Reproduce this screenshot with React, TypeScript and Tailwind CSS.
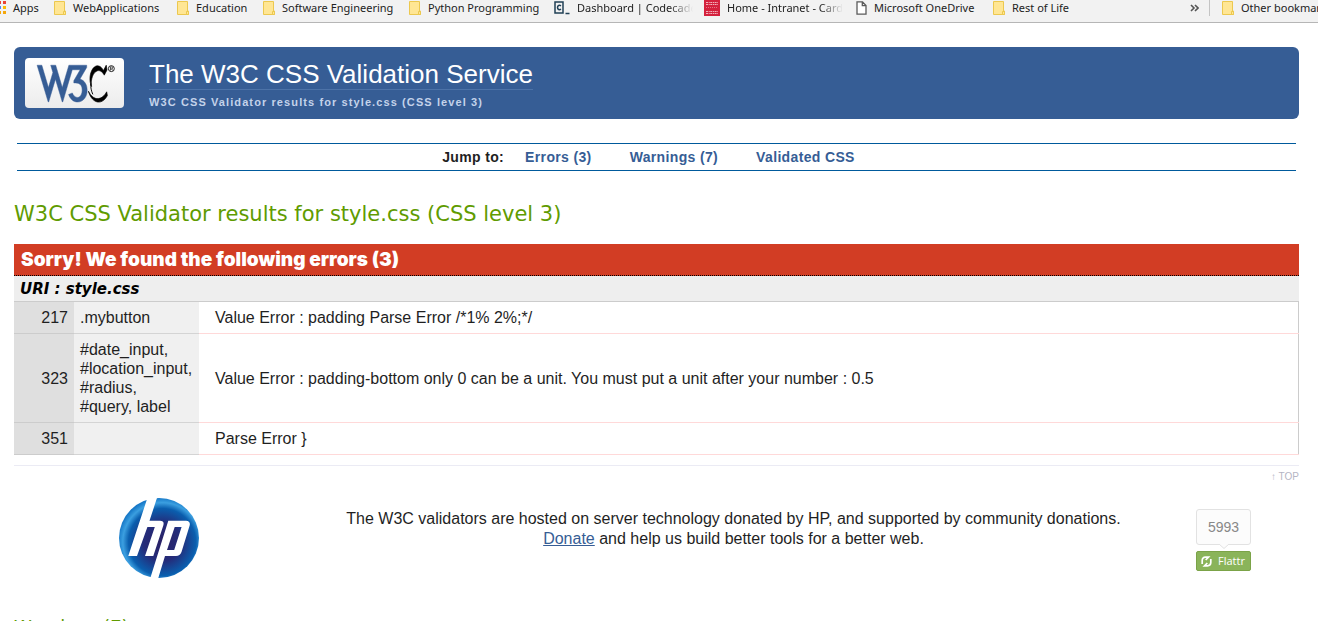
import React from "react";

function FolderIcon() {
  return (
    <svg className="shrink-0" width="12" height="14" viewBox="0 0 12 14" aria-hidden="true">
      <path d="M.5 .5h10v9.500h1v3.500h-11z" fill="#ffe694" stroke="#ecc84f" />
      <path d="M9.500 10.500h2v3h-2z" fill="#ffe694" stroke="#ecc84f" />
    </svg>
  );
}

function AppsIcon() {
  const colors = ["#ea4335", "#ea4335", "#4285f4", "#fbbc05", "#f4a70b", "#f4a70b"];
  return (
    <svg className="shrink-0" width="7" height="14" viewBox="0 0 7 14" aria-hidden="true">
      {colors.map((color, i) => (
        <rect key={i} x={(i % 2) * 5 - 2} y={Math.floor(i / 2) * 5} width="3" height="3" fill={color} />
      ))}
    </svg>
  );
}

function CodecademyIcon() {
  return (
    <svg className="shrink-0" width="16" height="16" viewBox="0 0 16 16" aria-hidden="true">
      <path d="M1 2h8v11H1z" fill="#f2f2f2" stroke="#204056" strokeWidth="1.500" />
      <path d="M7 5.800c-1.500-1-3.500-.5-3.500 1.700s2 2.700 3.500 1.700M11.500 13.500h4" fill="none" stroke="#204056" strokeWidth="1.500" />
    </svg>
  );
}

function CardiffIcon() {
  return (
    <svg className="shrink-0" width="16" height="16" viewBox="0 0 16 16" aria-hidden="true">
      <path d="M0 0h16v16H0z" fill="#d4213d" />
      <path d="M2 2.500h12M2 4.500h12M2 11.500h12M2 13.500h12" stroke="#f3b0ba" strokeDasharray="2 .7 1 .6" />
      <path d="M2 7.500h12" stroke="#e57183" strokeDasharray="1 1" />
    </svg>
  );
}

function PageIcon() {
  return (
    <svg className="shrink-0" width="11" height="14" viewBox="0 0 11 14" aria-hidden="true">
      <path d="M1 .8h5.500L10 4.500v8.700H1zM6.300 1v3.700H10" fill="#fff" stroke="#5a5a5a" strokeWidth="1.300" />
    </svg>
  );
}

function W3CLogo() {
  return (
    <svg width="80" height="39" viewBox="0 0 70 34" role="img" aria-label="W3C">
      <path
        fill="#365d95"
        stroke="#365d95"
        strokeWidth=".4"
        d="m18.117 1.006 5.759 19.580 5.759-19.580h15.607v1.946l-5.879 10.128c2.065.663 3.627 1.868 4.686 3.615 1.059 1.748 1.589 3.799 1.589 6.155 0 2.914-.775 5.363-2.324 7.348-1.549 1.985-3.555 2.978-6.017 2.978-1.854 0-3.469-.589-4.845-1.767-1.377-1.178-2.396-2.773-3.058-4.786l3.256-1.350c.477 1.218 1.106 2.178 1.887 2.879.781.702 1.701 1.052 2.760 1.052 1.112 0 2.052-.622 2.820-1.866.768-1.245 1.152-2.740 1.152-4.489 0-1.933-.411-3.429-1.231-4.488-.954-1.244-2.450-1.867-4.489-1.867h-1.588v-1.906l5.560-9.612h-6.712l-.382.65-8.163 27.548h-.397l-5.958-19.937-5.957 19.937h-.397L1.827 1.006h4.170l5.759 19.580 3.892-13.185-1.906-6.395z"
      />
      <g transform="translate(-2.600 0)" stroke="#000" strokeWidth=".6">
        <path d="m64.920 1.006.676 4.107-2.391 4.575s-.918-1.941-2.443-3.015c-1.285-.905-2.122-1.101-3.431-.832-1.681.347-3.587 2.357-4.419 4.835-.995 2.965-1.005 4.400-1.040 5.718-.056 2.113.277 3.362.277 3.362s-1.452-2.686-1.438-6.620c.009-2.808.451-5.354 1.750-7.867 1.143-2.209 2.842-3.535 4.350-3.691 1.559-.161 2.791.59 3.743 1.404 1 .854 2.010 2.721 2.010 2.721z" />
        <path d="M65.300 24.300s-1.057 1.889-1.715 2.617c-.659.728-1.837 2.010-3.292 2.651-1.456.641-2.218.762-3.656.624-1.437-.138-2.772-.97-3.240-1.317-.468-.347-1.664-1.369-2.340-2.322-.676-.953-1.733-2.859-1.733-2.859s.589 1.910.958 2.721c.212.467.864 1.894 1.790 3.137.863 1.159 2.539 3.154 5.086 3.604 2.547.451 4.297-.693 4.730-.97.433-.277 1.346-1.042 1.924-1.660.603-.645 1.174-1.468 1.490-1.962.231-.36.607-1.092.607-1.092z" />
        <path d="M51.300 17c0 3.500.5 6.500 1.900 9.500" fill="none" strokeWidth=".8" />
      </g>
      <circle cx="66.800" cy="4" r="2.600" fill="none" stroke="#111" strokeWidth=".8" />
      <path d="M66 5.600V2.500h1.200a.8.8 0 0 1 0 1.700H66m1 0 .9 1.400" fill="none" stroke="#111" strokeWidth=".6" />
    </svg>
  );
}

function HPLogo() {
  return (
    <svg className="shrink-0" width="80" height="80" viewBox="0 0 80 80" role="img" aria-label="HP">
      <defs>
        <radialGradient id="hp-blue" cx=".54" cy=".55" r=".6">
          <stop offset="0" stopColor="#2a2165" />
          <stop offset=".4" stopColor="#242c7a" />
          <stop offset=".7" stopColor="#0a5eae" />
          <stop offset=".82" stopColor="#3b9fe0" />
          <stop offset=".92" stopColor="#1779c8" />
          <stop offset="1" stopColor="#0e6fc0" />
        </radialGradient>
      </defs>
      <circle cx="40" cy="40" r="40" fill="url(#hp-blue)" />
      <path
        fill="#fff"
        fillRule="evenodd"
        d="M28.700-1h9.600l-7.800 23.700H41q4.700 0 3.300 4.800L34.300 58H26l9.800-29h-7.400L18 58H9.300zM49.300 22.700H67q5 .3 3.500 5.300l-8 26q-1.500 4-5.500 4H46l-7 23h-8zM55.700 29l-7.700 23h7.200l7.400-23z"
      />
    </svg>
  );
}

const bookmarks = [
  { label: "WebApplications", icon: <FolderIcon />, box: "w-[123px]" },
  { label: "Education", icon: <FolderIcon />, box: "w-[86px]" },
  { label: "Software Engineering", icon: <FolderIcon />, box: "w-[146px]" },
  { label: "Python Programming", icon: <FolderIcon />, box: "w-[145px]" },
  { label: "Dashboard | Codecademy", icon: <CodecademyIcon />, box: "w-[150px]", fade: true },
  { label: "Home - Intranet - Cardiff", icon: <CardiffIcon />, box: "w-[152px]", fade: true },
  { label: "Microsoft OneDrive", icon: <PageIcon />, box: "w-[137px]" },
  { label: "Rest of Life", icon: <FolderIcon />, box: "w-[90px]" },
];

function BookmarksBar() {
  return (
    <nav
      aria-label="Bookmarks"
      className="flex h-[23px] items-center overflow-hidden border-b border-[#b6b6b6] bg-[#f2f2f2] pb-[6px] font-['Noto_Sans','Open_Sans',sans-serif] text-[11px] whitespace-nowrap text-[#222]"
    >
      <a href="#apps" className="flex w-[54px] shrink-0 items-center gap-[6px]">
        <AppsIcon />
        Apps
      </a>
      {bookmarks.map((b) => (
        <a key={b.label} href="#bookmark" className={`flex shrink-0 items-center gap-[7px] ${b.box}`}>
          {b.icon}
          {b.fade ? (
            <span className="w-[116px] overflow-hidden [mask-image:linear-gradient(to_right,black_80%,transparent)]">
              {b.label}
            </span>
          ) : (
            <span>{b.label}</span>
          )}
        </a>
      ))}
      <button type="button" aria-label="More bookmarks" className="ml-auto">
        <svg width="9" height="8" viewBox="0 0 9 8" aria-hidden="true">
          <path d="M1 1l3 3-3 3M5 1l3 3-3 3" fill="none" stroke="#555" strokeWidth="1.600" />
        </svg>
      </button>
      <a href="#other" className="ml-[10px] flex h-[16px] w-[109px] items-center gap-[7px] border-l border-[#c4c4c4] pl-[12px]">
        <FolderIcon />
        <span>Other bookmarks</span>
      </a>
    </nav>
  );
}

const errors = [
  { line: 217, selector: ".mybutton", message: "Value Error : padding Parse Error /*1% 2%;*/" },
  {
    line: 323,
    selector: "#date_input, #location_input, #radius, #query, label",
    message: "Value Error : padding-bottom only 0 can be a unit. You must put a unit after your number : 0.5",
  },
  { line: 351, selector: "", message: "Parse Error }" },
];

function ErrorTable() {
  return (
    <table className="w-full border-collapse text-[16px] leading-[19px] text-[#1f1f1f]">
      <tbody>
        {errors.map((e) => (
          <tr key={e.line}>
            <td className="w-[60px] border-b border-[#cccccc] bg-[#dfdfdf] px-[6px] py-[6px] text-right">{e.line}</td>
            <td className="w-[125px] border-b border-[#d4d4d4] bg-[#f0f0f0] px-[6px] py-[6px]">{e.selector}</td>
            <td className="border-r border-b border-r-[#cccccc] border-b-[#ffd9d9] py-[6px] pl-[16px]">{e.message}</td>
          </tr>
        ))}
      </tbody>
    </table>
  );
}

function FlattrWidget() {
  return (
    <div className="flex w-[55px] shrink-0 flex-col gap-[6px]">
      <div className="relative flex h-[36px] items-center justify-center rounded-[3px] border border-[#e2e2e2] bg-[#fcfcfc] text-[14px] text-[#888]">
        5993
        <svg className="absolute top-[34px] left-[22px]" width="10" height="5" viewBox="0 0 10 5" aria-hidden="true">
          <path d="M0 0 5 4.500 10 0" fill="#fcfcfc" stroke="#e2e2e2" />
        </svg>
      </div>
      <button
        type="button"
        className="flex h-[20px] items-center gap-[6px] rounded-[2px] border border-[#7ba348] bg-[#8ab45a] pl-[4px] font-['Open_Sans',sans-serif] text-[11px] font-medium text-white"
      >
        <svg width="11" height="11" viewBox="0 0 11 11" aria-hidden="true">
          <path
            d="M1.200 8V4.500Q1.200 1.200 4.500 1.200H7.500L4.700 4M9.800 3v3.500q0 3.300-3.300 3.300h-3L6.300 7"
            fill="none"
            stroke="#fff"
            strokeWidth="1.700"
          />
        </svg>
        Flattr
      </button>
    </div>
  );
}

export default function App() {
  return (
    <div className="h-screen overflow-hidden bg-white font-['Liberation_Sans',Arial,sans-serif]">
      <BookmarksBar />
      <div className="pt-[24px] pr-[19px] pl-[14px]">
        <header className="flex h-[72px] items-center gap-[25px] rounded-[6px] bg-[#365d95] pl-[11px]">
          <a
            href="#w3c"
            className="flex h-[50px] w-[99px] items-center justify-center rounded-[4px] bg-linear-to-b from-white to-[#ececec]"
          >
            <W3CLogo />
          </a>
          <div className="pt-[2px]">
            <h1 className="border-b border-[#4d73a8] text-[26px] leading-[30px] text-white">
              <a href="#home">The W3C CSS Validation Service</a>
            </h1>
            <p className="mt-[4px] text-[11px] leading-[16px] font-bold tracking-widest text-[#c4d3ea]">
              W3C CSS Validator results for style.css (CSS level 3)
            </p>
          </div>
        </header>

        <nav
          aria-label="Jump to"
          className="mx-[3px] mt-[24px] flex h-[28px] items-center justify-center border-y border-[#005a9c] text-[14px] font-bold tracking-wide text-[#365d95]"
        >
          <span className="mr-[21px] text-[#1f1f1f]">Jump to:</span>
          <a href="#errors" className="mr-[38px]">Errors (3)</a>
          <a href="#warnings" className="mr-[38px]">Warnings (7)</a>
          <a href="#css" className="mr-[16px]">Validated CSS</a>
        </nav>

        <main>
          <h2 className="mt-[29px] font-['DejaVu_Sans',Verdana,sans-serif] text-[21px] leading-[28px] text-[#609b00]">
            W3C CSS Validator results for style.css (CSS level 3)
          </h2>

          <section id="errors">
            <h3 className="mt-[16px] h-[32px] border-b border-dotted border-black bg-[#d23d24] pl-[7px] font-[Inter,sans-serif] text-[19px] leading-[31px] font-black text-white">
              Sorry! We found the following errors (3)
            </h3>
            <h4 className="h-[26px] border-b border-[#cccccc] bg-[#eeeeee] pl-[6px] font-['DejaVu_Sans',Verdana,sans-serif] text-[15px] leading-[26px] font-bold text-black italic">
              URI : style.css
            </h4>
            <ErrorTable />
          </section>

          <p className="mt-[10px] border-t border-[#ebebf4] pt-[4px] text-right text-[10px] leading-[13px] text-[#b5b5c4]">
            <a href="#top">↑ TOP</a>
          </p>

          <section className="mt-[15px] flex pr-[48px] pl-[105px]">
            <HPLogo />
            <p className="mt-[11px] ml-[72px] flex-1 text-center text-[16px] leading-[20px] text-[#1f1f1f]">
              The W3C validators are hosted on server technology donated by HP, and supported by community donations.
              <br />
              <a href="#donate" className="text-[#365d95] underline">Donate</a> and help us build better tools for a better web.
            </p>
            <div className="mt-[11px]">
              <FlattrWidget />
            </div>
          </section>

          <h2
            id="warnings"
            className="mt-[35px] font-['DejaVu_Sans',Verdana,sans-serif] text-[18px] leading-[28px] text-[#609b00]"
          >
            Warnings (7)
          </h2>
        </main>
      </div>
    </div>
  );
}
